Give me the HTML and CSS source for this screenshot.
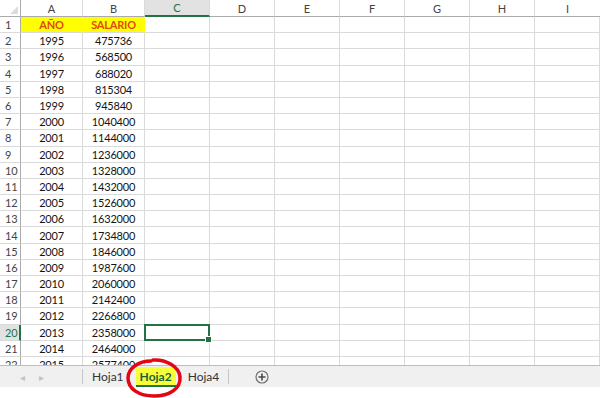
FILE: index.html
```html
<!DOCTYPE html>
<html lang="es">
<head>
<meta charset="UTF-8">
<title>Libro1 - Hoja2</title>
<link rel="stylesheet" href="styles.css">
</head>
<body>
<div class="sheet">
    <div class="grid">
        <div class="corner"><span class="tri"></span></div>
        <div class="colhead">A</div>
        <div class="colhead">B</div>
        <div class="colhead active">C</div>
        <div class="colhead">D</div>
        <div class="colhead">E</div>
        <div class="colhead">F</div>
        <div class="colhead">G</div>
        <div class="colhead">H</div>
        <div class="colhead last">I</div>

        <div class="rowhead">1</div><div class="cell title">AÑO</div><div class="cell title">SALARIO</div><div class="cell"></div><div class="cell"></div><div class="cell"></div><div class="cell"></div><div class="cell"></div><div class="cell"></div><div class="cell"></div>
        <div class="rowhead">2</div><div class="cell">1995</div><div class="cell">475736</div><div class="cell"></div><div class="cell"></div><div class="cell"></div><div class="cell"></div><div class="cell"></div><div class="cell"></div><div class="cell"></div>
        <div class="rowhead">3</div><div class="cell">1996</div><div class="cell">568500</div><div class="cell"></div><div class="cell"></div><div class="cell"></div><div class="cell"></div><div class="cell"></div><div class="cell"></div><div class="cell"></div>
        <div class="rowhead">4</div><div class="cell">1997</div><div class="cell">688020</div><div class="cell"></div><div class="cell"></div><div class="cell"></div><div class="cell"></div><div class="cell"></div><div class="cell"></div><div class="cell"></div>
        <div class="rowhead">5</div><div class="cell">1998</div><div class="cell">815304</div><div class="cell"></div><div class="cell"></div><div class="cell"></div><div class="cell"></div><div class="cell"></div><div class="cell"></div><div class="cell"></div>
        <div class="rowhead">6</div><div class="cell">1999</div><div class="cell">945840</div><div class="cell"></div><div class="cell"></div><div class="cell"></div><div class="cell"></div><div class="cell"></div><div class="cell"></div><div class="cell"></div>
        <div class="rowhead">7</div><div class="cell">2000</div><div class="cell">1040400</div><div class="cell"></div><div class="cell"></div><div class="cell"></div><div class="cell"></div><div class="cell"></div><div class="cell"></div><div class="cell"></div>
        <div class="rowhead">8</div><div class="cell">2001</div><div class="cell">1144000</div><div class="cell"></div><div class="cell"></div><div class="cell"></div><div class="cell"></div><div class="cell"></div><div class="cell"></div><div class="cell"></div>
        <div class="rowhead">9</div><div class="cell">2002</div><div class="cell">1236000</div><div class="cell"></div><div class="cell"></div><div class="cell"></div><div class="cell"></div><div class="cell"></div><div class="cell"></div><div class="cell"></div>
        <div class="rowhead">10</div><div class="cell">2003</div><div class="cell">1328000</div><div class="cell"></div><div class="cell"></div><div class="cell"></div><div class="cell"></div><div class="cell"></div><div class="cell"></div><div class="cell"></div>
        <div class="rowhead">11</div><div class="cell">2004</div><div class="cell">1432000</div><div class="cell"></div><div class="cell"></div><div class="cell"></div><div class="cell"></div><div class="cell"></div><div class="cell"></div><div class="cell"></div>
        <div class="rowhead">12</div><div class="cell">2005</div><div class="cell">1526000</div><div class="cell"></div><div class="cell"></div><div class="cell"></div><div class="cell"></div><div class="cell"></div><div class="cell"></div><div class="cell"></div>
        <div class="rowhead">13</div><div class="cell">2006</div><div class="cell">1632000</div><div class="cell"></div><div class="cell"></div><div class="cell"></div><div class="cell"></div><div class="cell"></div><div class="cell"></div><div class="cell"></div>
        <div class="rowhead">14</div><div class="cell">2007</div><div class="cell">1734800</div><div class="cell"></div><div class="cell"></div><div class="cell"></div><div class="cell"></div><div class="cell"></div><div class="cell"></div><div class="cell"></div>
        <div class="rowhead">15</div><div class="cell">2008</div><div class="cell">1846000</div><div class="cell"></div><div class="cell"></div><div class="cell"></div><div class="cell"></div><div class="cell"></div><div class="cell"></div><div class="cell"></div>
        <div class="rowhead">16</div><div class="cell">2009</div><div class="cell">1987600</div><div class="cell"></div><div class="cell"></div><div class="cell"></div><div class="cell"></div><div class="cell"></div><div class="cell"></div><div class="cell"></div>
        <div class="rowhead">17</div><div class="cell">2010</div><div class="cell">2060000</div><div class="cell"></div><div class="cell"></div><div class="cell"></div><div class="cell"></div><div class="cell"></div><div class="cell"></div><div class="cell"></div>
        <div class="rowhead">18</div><div class="cell">2011</div><div class="cell">2142400</div><div class="cell"></div><div class="cell"></div><div class="cell"></div><div class="cell"></div><div class="cell"></div><div class="cell"></div><div class="cell"></div>
        <div class="rowhead">19</div><div class="cell">2012</div><div class="cell">2266800</div><div class="cell"></div><div class="cell"></div><div class="cell"></div><div class="cell"></div><div class="cell"></div><div class="cell"></div><div class="cell"></div>
        <div class="rowhead active">20</div><div class="cell">2013</div><div class="cell">2358000</div><div class="cell selected"><span class="handle"></span></div><div class="cell"></div><div class="cell"></div><div class="cell"></div><div class="cell"></div><div class="cell"></div><div class="cell"></div>
        <div class="rowhead">21</div><div class="cell">2014</div><div class="cell">2464000</div><div class="cell"></div><div class="cell"></div><div class="cell"></div><div class="cell"></div><div class="cell"></div><div class="cell"></div><div class="cell"></div>
        <div class="rowhead">22</div><div class="cell">2015</div><div class="cell">2577400</div><div class="cell"></div><div class="cell"></div><div class="cell"></div><div class="cell"></div><div class="cell"></div><div class="cell"></div><div class="cell"></div>
    </div>

    <div class="tabs">
        <div class="nav">
            <span class="arrow">&#9666;</span>
            <span class="arrow">&#9656;</span>
        </div>
        <div class="sep"></div>
        <div class="tab">Hoja1</div>
        <div class="tab current"><span class="mark">Hoja2</span></div>
        <div class="tab">Hoja4</div>
        <div class="sep"></div>
        <div class="add">
            <svg width="14" height="14" viewBox="0 0 14 14">
                <circle cx="7" cy="7" r="6" fill="none" stroke="#6f6f6f" stroke-width="1.2"/>
                <path d="M7 3.5v7M3.5 7h7" stroke="#4a4a4a" stroke-width="1.6"/>
            </svg>
        </div>
        <svg class="circled" width="58" height="42" viewBox="0 0 58 42">
            <path d="M28 3C40 2 54 9 55 20C56 32 44 39 29 39C14 39 3 32 3 21C3 11 14 4 26 4" fill="none" stroke="#e30613" stroke-width="3.5" stroke-linecap="round"/>
        </svg>
    </div>
</div>
</body>
</html>
```

FILE: styles.css
```css
body {
    margin: 0;
    font-family: Lato, "Open Sans", sans-serif;
    background-color: #fff;
}
.sheet {
    width: 600px;
    height: 398px;
    overflow: hidden;
    position: relative;
}
.grid {
    display: grid;
    grid-template-columns: 21px 62px 62px repeat(7, 65px);
    grid-template-rows: 17px repeat(22, 16.2px);
    height: 366px;
    overflow: hidden;
    border-bottom: 1px solid #bdbdbd;
    box-sizing: border-box;
}
.grid > div {
    box-sizing: border-box;
    border-right: 1px solid #dadada;
    border-bottom: 1px solid #dadada;
    display: flex;
    align-items: center;
    justify-content: center;
    font-size: 11px;
    letter-spacing: -0.2px;
    color: #141414;
    white-space: nowrap;
    overflow: hidden;
}
.grid > .corner {
    position: relative;
    border-bottom: 1px solid #ababab;
    border-right: 1px solid #ababab;
}
.tri {
    position: absolute;
    right: 2px;
    bottom: 2px;
    width: 0;
    height: 0;
    border-left: 8px solid transparent;
    border-bottom: 8px solid #dcdcdc;
}
.grid > .colhead {
    color: #444;
    font-size: 11px;
    letter-spacing: 0;
    border-bottom: 1px solid #ababab;
    border-right: 1px solid #dadada;
}
.grid > .colhead.active {
    background-color: #e2e2e2;
    color: #217346;
    border-bottom: 2px solid #217346;
}
.grid > .colhead.last {
    border-right: none;
}
.grid > .rowhead {
    color: #444;
    border-right: 1px solid #ababab;
    justify-content: flex-start;
    padding-left: 5px;
}
.grid > .rowhead.active {
    background-color: #e2e2e2;
    color: #217346;
    border-right: 2px solid #217346;
}
.grid > .title {
    background-color: #ffff00;
    color: #de4a0c;
    font-weight: bold;
    border-right-color: #ffff00;
}
.grid > .selected {
    position: relative;
    overflow: visible;
    border: 2px solid #217346;
    margin: -1px 0 0 -1px;
}
.handle {
    position: absolute;
    right: -4px;
    bottom: -4px;
    width: 5px;
    height: 5px;
    background-color: #217346;
    border: 1px solid #fff;
}
.tabs {
    position: relative;
    height: 21px;
    background-color: #f0f0f0;
    display: flex;
    align-items: center;
    font-size: 12px;
    color: #333;
}
.nav {
    width: 82px;
    display: flex;
    gap: 14px;
    padding-left: 20px;
    box-sizing: border-box;
}
.arrow {
    color: #c4c4c4;
    font-size: 10px;
}
.sep {
    width: 1px;
    height: 15px;
    background-color: #c6c6c6;
}
.tab {
    padding: 0 9px;
    height: 21px;
    display: flex;
    align-items: center;
}
.tab.current {
    padding: 0 3px;
}
.mark {
    background-color: #f7ff3a;
    font-weight: bold;
    color: #1d5e38;
    padding: 2px 4px 1px;
    border-bottom: 2px solid #217346;
}
.add {
    margin-left: 26px;
    display: flex;
}
.circled {
    position: absolute;
    left: 125px;
    top: -9px;
}
```
